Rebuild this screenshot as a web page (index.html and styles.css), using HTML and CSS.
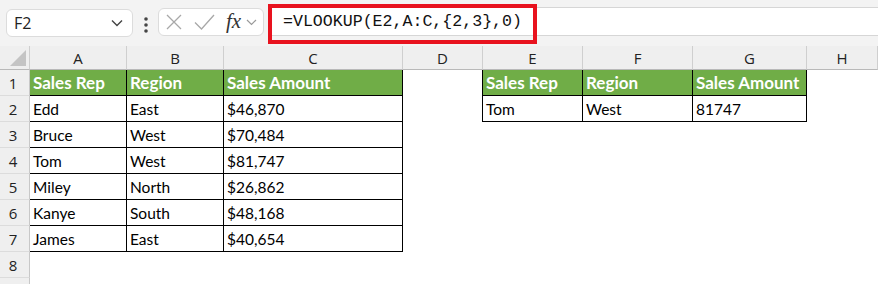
FILE: index.html
```html
<!DOCTYPE html>
<html lang="en">
<head>
    <meta charset="UTF-8">
    <title>VLOOKUP multiple columns</title>
    <link rel="stylesheet" href="styles.css">
</head>
<body>

<!-- Barra de fórmulas -->
<div class="formula-bar">
    <div class="name-box">
        <span>F2</span>
        <svg class="chev" width="12" height="8" viewBox="0 0 12 8"><polyline points="1,1.5 6,6.5 11,1.5" fill="none" stroke="#444" stroke-width="1.4"/></svg>
    </div>
    <svg class="dots" width="6" height="18" viewBox="0 0 6 18"><circle cx="3" cy="3" r="1.8"/><circle cx="3" cy="9" r="1.8"/><circle cx="3" cy="15" r="1.8"/></svg>
    <div class="fx-box">
        <svg class="ico-x" width="16" height="16" viewBox="0 0 16 16"><path d="M1 1L15 15M15 1L1 15" stroke="#a8a8a8" stroke-width="1.3"/></svg>
        <svg class="ico-ok" width="21" height="16" viewBox="0 0 21 16"><polyline points="1,8.5 7.5,15 20,1" fill="none" stroke="#a8a8a8" stroke-width="1.3"/></svg>
        <span class="fx">fx</span>
        <svg class="chev-sm" width="11" height="7" viewBox="0 0 11 7"><polyline points="1,1 5.5,5.5 10,1" fill="none" stroke="#9a9a9a" stroke-width="1.2"/></svg>
    </div>
    <div class="formula-input">=VLOOKUP(E2,A:C,{2,3},0)</div>
    <div class="highlight"></div>
</div>

<!-- Hoja -->
<div class="sheet">
    <div class="corner"><span class="tri"></span></div>
    <div class="hd">A</div><div class="hd">B</div><div class="hd">C</div><div class="hd">D</div>
    <div class="hd">E</div><div class="hd">F</div><div class="hd">G</div><div class="hd">H</div>

    <div class="rh">1</div>
    <div class="g">Sales Rep</div><div class="g">Region</div><div class="g">Sales Amount</div>
    <div class="c edge"></div>
    <div class="g">Sales Rep</div><div class="g">Region</div><div class="g">Sales Amount</div>
    <div class="c"></div>

    <div class="rh">2</div>
    <div class="t">Edd</div><div class="t">East</div><div class="t">$46,870</div>
    <div class="c edge"></div>
    <div class="t">Tom</div><div class="t">West</div><div class="t">81747</div>
    <div class="c"></div>

    <div class="rh">3</div>
    <div class="t">Bruce</div><div class="t">West</div><div class="t">$70,484</div>
    <div class="c"></div><div class="c"></div><div class="c"></div><div class="c"></div><div class="c"></div>

    <div class="rh">4</div>
    <div class="t">Tom</div><div class="t">West</div><div class="t">$81,747</div>
    <div class="c"></div><div class="c"></div><div class="c"></div><div class="c"></div><div class="c"></div>

    <div class="rh">5</div>
    <div class="t">Miley</div><div class="t">North</div><div class="t">$26,862</div>
    <div class="c"></div><div class="c"></div><div class="c"></div><div class="c"></div><div class="c"></div>

    <div class="rh">6</div>
    <div class="t">Kanye</div><div class="t">South</div><div class="t">$48,168</div>
    <div class="c"></div><div class="c"></div><div class="c"></div><div class="c"></div><div class="c"></div>

    <div class="rh">7</div>
    <div class="t">James</div><div class="t">East</div><div class="t">$40,654</div>
    <div class="c"></div><div class="c"></div><div class="c"></div><div class="c"></div><div class="c"></div>

    <div class="rh">8</div>
    <div class="c"></div><div class="c"></div><div class="c"></div><div class="c"></div>
    <div class="c"></div><div class="c"></div><div class="c"></div><div class="c"></div>

    <div class="rh"></div>
</div>

</body>
</html>
```

FILE: styles.css
```css
/* Estilos generales */
body, html {
    margin: 0;
    padding: 0;
    overflow: hidden;
    background-color: #ffffff;
}

/* Barra de fórmulas */
.formula-bar {
    position: relative;
    height: 46px;
    box-sizing: border-box;
    padding-top: 8px;
    background-color: #f3f3f3;
    display: flex;
    align-items: flex-start;
    font-family: 'Open Sans', sans-serif;
}

.name-box {
    margin-left: 6px;
    margin-top: 1px;
    width: 127px;
    height: 28px;
    box-sizing: border-box;
    background-color: #fff;
    border: 1px solid #dcdcdc;
    border-radius: 6px;
    display: flex;
    align-items: center;
    justify-content: space-between;
    padding: 0 9px 0 7px;
    font-size: 16px;
    color: #222;
}

.dots {
    margin: 8px 0 0 10px;
    fill: #444;
}

.fx-box {
    margin-left: 9px;
    width: 106px;
    height: 28px;
    box-sizing: border-box;
    background-color: #fff;
    border: 1px solid #dcdcdc;
    border-radius: 6px;
    display: flex;
    align-items: center;
    padding-left: 7px;
}

.ico-ok {
    margin-left: 12px;
}

.fx {
    margin-left: 11px;
    font-family: 'Liberation Serif', serif;
    font-style: italic;
    font-size: 21px;
    color: #333;
    line-height: 1;
    margin-top: -2px;
}

.chev-sm {
    margin-left: 5px;
}

.formula-input {
    margin-left: 4px;
    flex: 1;
    height: 29px;
    margin-top: -1px;
    box-sizing: border-box;
    background-color: #fff;
    border-top: 1px solid #d6d6d6;
    border-bottom: 1px solid #d6d6d6;
    padding-left: 15px;
    font-family: 'Liberation Mono', monospace;
    font-size: 16.6px;
    line-height: 28px;
    color: #111;
}

/* Recuadro rojo de resaltado */
.highlight {
    position: absolute;
    left: 268px;
    top: 4px;
    width: 269px;
    height: 40px;
    box-sizing: border-box;
    border: 4px solid #e8121e;
}

/* Cuadrícula */
.sheet {
    display: grid;
    grid-template-columns: 30px 97px 97px 179px 80px 100px 110px 114px 1fr;
    grid-template-rows: 24px repeat(8, 26px) 7px;
    font-family: 'Lato', sans-serif;
    font-size: 15.5px;
    color: #000;
}

.sheet > div {
    box-sizing: border-box;
    display: flex;
    align-items: center;
    white-space: nowrap;
    overflow: hidden;
}

.corner, .hd {
    background-color: #efefef;
    border-bottom: 1px solid #b9b9b9;
    border-right: 1px solid #cfcfcf;
}

.corner {
    position: relative;
}

.tri {
    position: absolute;
    left: 10px;
    top: 4px;
    width: 0;
    height: 0;
    border-left: 16px solid transparent;
    border-bottom: 16px solid #c4c4c4;
}

.hd {
    justify-content: center;
    font-family: 'Open Sans', sans-serif;
    font-size: 15px;
    color: #222;
    padding-top: 1px;
}

.hd:last-of-type {
    border-right: none;
}

.rh {
    justify-content: center;
    background-color: #efefef;
    border-right: 1px solid #c8c8c8;
    border-bottom: 1px solid #dcdcdc;
    font-family: 'Open Sans', sans-serif;
    font-size: 15px;
    color: #222;
    padding-right: 3px;
}

.g {
    background-color: #70ad47;
    color: #fff;
    font-weight: bold;
    font-size: 17px;
    padding-left: 3px;
    border-right: 1px solid #000;
    border-bottom: 1px solid #000;
}

.t {
    padding-left: 3px;
    border-right: 1px solid #000;
    border-bottom: 1px solid #000;
}

.edge {
    border-right: 1px solid #000;
}
```
